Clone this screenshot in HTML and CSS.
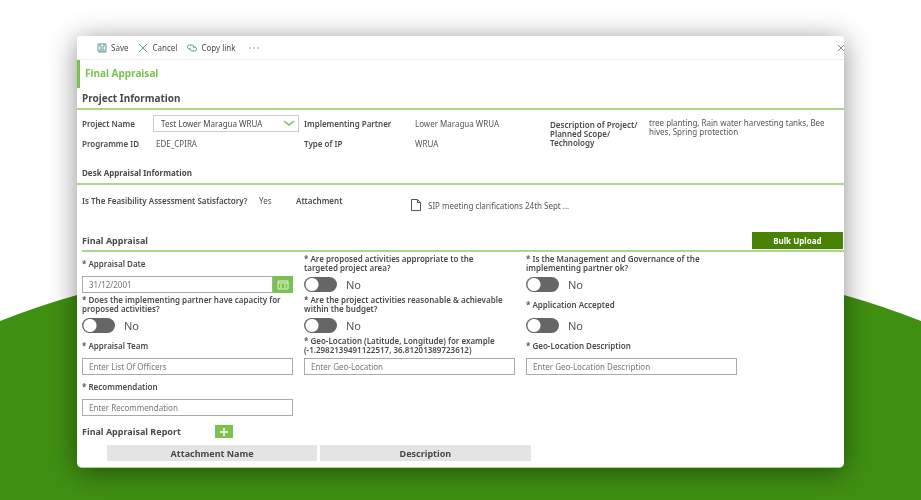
FILE: index.html
```
<!DOCTYPE html>
<html lang="en">
<head>
  <meta charset="UTF-8" />
  <meta name="viewport" content="width=device-width, initial-scale=1.0"/>
  <title>Final Appraisal</title>
  <link rel="stylesheet" href="styles.css">
</head>
<body>
  <svg class="hill" viewBox="0 0 921 207" preserveAspectRatio="none" aria-hidden="true">
    <path d="M0 28 Q38 13 77 2 L300 -60 H621 L844 2 Q883 13 921 28 V207 H0 Z" fill="#3f9012"/>
  </svg>

  <main class="card">
    <!-- Command bar -->
    <div class="toolbar">
      <button type="button" class="tool">
        <svg class="icon" viewBox="0 0 10 10"><path d="M1 1h8v8H2L1 8zM3 1v3h4V1M3 9V6h4v3M5 7v2"/></svg>
        Save
      </button>
      <button type="button" class="tool">
        <svg class="icon" viewBox="0 0 10 10"><path d="M1 1l8 8M9 1l-8 8"/></svg>
        Cancel
      </button>
      <button type="button" class="tool">
        <svg class="icon" viewBox="0 0 10 10"><path d="M3.500 6H2.500a2 2 0 0 1 0-4H5a2 2 0 0 1 1.500 3.200M6 4h1.500a2 2 0 0 1 0 4H5a2 2 0 0 1-1.500-3.200"/></svg>
        Copy link
      </button>
      <button type="button" class="tool more" aria-label="More">
        <svg class="icon dots" viewBox="0 0 10 10"><circle cx="1" cy="5" r=".7"/><circle cx="5" cy="5" r=".7"/><circle cx="9" cy="5" r=".7"/></svg>
      </button>
      <button type="button" class="tool close" aria-label="Close">
        <svg class="icon" viewBox="0 0 10 10"><path d="M2 2l6 6M8 2l-6 6"/></svg>
      </button>
    </div>

    <h1 class="title">Final Appraisal</h1>

    <h2 class="section-title large">Project Information</h2>
    <div class="info">
      <div class="pairs name-pairs">
        <label class="label" for="project">Project Name</label>
        <div class="select-wrap">
          <select id="project"><option>Test Lower Maragua WRUA</option></select>
          <svg class="chevron" viewBox="0 0 12 8"><path d="M1 2l5 4 5-4"/></svg>
        </div>
        <span class="label">Programme ID</span>
        <span class="value indent">EDE_CPIRA</span>
      </div>
      <div class="pairs partner-pairs">
        <span class="label">Implementing Partner</span>
        <span class="value">Lower Maragua WRUA</span>
        <span class="label">Type of IP</span>
        <span class="value">WRUA</span>
      </div>
      <div class="scope">
        <span class="label scope-label">Description of Project/<br>Planned Scope/<br>Technology</span>
        <span class="value">tree planting, Rain water harvesting tanks, Bee hives, Spring protection</span>
      </div>
    </div>

    <h2 class="section-title">Desk Appraisal Information</h2>
    <div class="desk">
      <span class="label">Is The Feasibility Assessment Satisfactory?</span>
      <span class="value">Yes</span>
      <span class="label">Attachment</span>
      <a class="file" href="#">
        <svg class="file-icon" viewBox="0 0 10 12"><path d="M.5.5h6l3 3v8h-9zM6.500.5v3h3"/></svg>
        SIP meeting clarifications 24th Sept ...
      </a>
    </div>

    <div class="section-bar">
      <h2>Final Appraisal</h2>
      <button type="button" class="bulk">Bulk Upload</button>
    </div>

    <form class="form">
      <div class="field">
        <label for="date">* Appraisal Date</label>
        <div class="date">
          <input type="text" id="date" value="31/12/2001">
          <button type="button" aria-label="Pick a date">
            <svg viewBox="0 0 12 10"><path d="M1 1h10v8H1zM1 3h10M3 5h2M7 5h2M3 7h2M7 7h2"/></svg>
          </button>
        </div>
      </div>
      <div class="field">
        <label for="activities">* Are proposed activities appropriate to the targeted project area?</label>
        <div class="switch"><input type="checkbox" id="activities"><span>No</span></div>
      </div>
      <div class="field">
        <label for="governance">* Is the Management and Governance of the implementing partner ok?</label>
        <div class="switch"><input type="checkbox" id="governance"><span>No</span></div>
      </div>
      <div class="field">
        <label for="capacity">* Does the implementing partner have capacity for proposed activities?</label>
        <div class="switch"><input type="checkbox" id="capacity"><span>No</span></div>
      </div>
      <div class="field">
        <label for="budget">* Are the project activities reasonable &amp; achievable within the budget?</label>
        <div class="switch"><input type="checkbox" id="budget"><span>No</span></div>
      </div>
      <div class="field">
        <label for="accepted">* Application Accepted</label>
        <div class="switch"><input type="checkbox" id="accepted"><span>No</span></div>
      </div>
      <div class="field">
        <label for="team">* Appraisal Team</label>
        <input type="text" id="team" placeholder="Enter List Of Officers">
      </div>
      <div class="field">
        <label for="geo">* Geo-Location (Latitude, Longitude) for example (-1.2982139491122517, 36.81201389723612)</label>
        <input type="text" id="geo" placeholder="Enter Geo-Location">
      </div>
      <div class="field">
        <label for="geo-desc">* Geo-Location Description</label>
        <input type="text" id="geo-desc" placeholder="Enter Geo-Location Description">
      </div>
      <div class="field">
        <label for="recommendation">* Recommendation</label>
        <input type="text" id="recommendation" placeholder="Enter Recommendation">
      </div>
    </form>

    <div class="report">
      <h2>Final Appraisal Report</h2>
      <button type="button" class="add" aria-label="Add report">
        <svg viewBox="0 0 8 8"><path d="M4 0v8M0 4h8"/></svg>
      </button>
    </div>
    <table class="attachments">
      <thead>
        <tr><th>Attachment Name</th><th>Description</th></tr>
      </thead>
    </table>
  </main>
</body>
</html>
```
FILE: styles.css
```
* {
  box-sizing: border-box;
}

body {
  margin: 0;
  min-height: 100vh;
  padding: 36px 77px 32px;
  font-family: "Noto Sans", "Open Sans", sans-serif;
  font-size: 8px;
  line-height: 9px;
  color: #4a4a4a;
  background: #fff;
}

/* green backdrop behind the card */
.hill {
  position: fixed;
  left: 0;
  bottom: 0;
  width: 100%;
  height: 207px;
  z-index: -1;
}

button, input, select {
  font: inherit;
  color: inherit;
}

button {
  border: none;
  padding: 0;
  cursor: pointer;
}

h1, h2 {
  margin: 0;
  font-size: 9px;
  font-weight: 700;
}

svg {
  fill: none;
}

.card {
  background: #fff;
  border-radius: 3px 3px 5px 5px;
  border-bottom: 1px solid #a9d18e;
  box-shadow: 0 4px 28px rgba(0, 0, 0, 0.45);
  padding-bottom: 6px;
  overflow: hidden;
}

.toolbar {
  display: flex;
  align-items: center;
  gap: 10px;
  height: 24px;
  padding-left: 20px;
  border-bottom: 1px solid #eee;
}

.tool {
  display: flex;
  align-items: center;
  gap: 4px;
  background: none;
}

.more {
  margin-left: 3px;
}

.icon {
  width: 10px;
  height: 10px;
  stroke: #45919b;
  stroke-width: 0.9;
}

.dots {
  fill: #777;
  stroke: none;
}

.close {
  margin-left: auto;
  margin-right: -2px;
}

.close .icon {
  stroke: #777;
}

.title {
  border-left: 3px solid #7ac150;
  padding: 9px 5px 10px;
  font-size: 10px;
  color: #7ac150;
}

.section-title {
  padding: 0 5px 6px;
  border-bottom: 2px solid #a9d68a;
  font-size: 8px;
}

.section-title.large {
  padding-top: 6px;
  padding-bottom: 5px;
  font-size: 10px;
}

.label {
  font-weight: 600;
}

.value {
  color: #555;
}

.info {
  display: grid;
  grid-template-columns: 222fr 246fr 294fr;
  padding: 3px 0 15px 5px;
}

.pairs {
  display: grid;
  grid-template-rows: 20px 20px;
  align-items: center;
}

.name-pairs {
  grid-template-columns: 71fr 151fr;
}

.partner-pairs {
  grid-template-columns: 111fr 135fr;
}

.scope {
  display: grid;
  grid-template-columns: 99fr 195fr;
  padding-top: 5px;
}

.scope-label {
  padding-top: 2px;
}

.indent {
  padding-left: 3px;
}

.select-wrap {
  position: relative;
  margin-right: 5px;
}

.select-wrap select {
  display: block;
  width: 100%;
  height: 17px;
  padding: 0 7px;
  border: 1px solid #ccc;
  background: #fff;
  line-height: 15px;
  appearance: none;
}

.chevron {
  position: absolute;
  top: 4px;
  right: 4px;
  width: 12px;
  height: 8px;
  stroke: #7ac150;
  stroke-width: 1.5;
  pointer-events: none;
}

.desk {
  display: grid;
  grid-template-columns: 177fr 37fr 115fr 433fr;
  align-items: start;
  padding: 11px 0 21px 5px;
}

.file {
  display: flex;
  align-items: center;
  gap: 7px;
  padding-top: 3px;
  color: #555;
  text-decoration: none;
}

.file-icon {
  width: 10px;
  height: 12px;
  stroke: #555;
}

.section-bar {
  display: flex;
  justify-content: space-between;
  align-items: center;
  margin-left: 5px;
  padding: 0 1px 1px 0;
  border-bottom: 2px solid #a9d68a;
}

.bulk {
  width: 12%;
  height: 17px;
  background: #498205;
  color: #fff;
  font-weight: 700;
}

/* three field columns, the fourth stays empty */
.form {
  display: grid;
  grid-template-columns: repeat(3, 211fr) 96fr;
  column-gap: 11px;
  margin-left: 5px;
}

.field:nth-child(3n + 1) {
  grid-column: 1;
}

.field label {
  display: flex;
  align-items: center;
  height: 24px;
  padding: 0 8px 2px 0;
  font-weight: 600;
}

.field input[type="text"] {
  display: block;
  width: 100%;
  height: 17px;
  padding: 0 6px;
  border: 1px solid #aaa;
  color: #777;
  line-height: 15px;
}

.field input::placeholder {
  color: #777;
}

.date {
  display: flex;
}

.date button {
  flex: 0 0 20px;
  height: 17px;
  background: #7ac150;
}

.date svg {
  display: block;
  width: 12px;
  height: 10px;
  margin: 0 auto;
  stroke: #e4f3da;
}

.switch {
  display: flex;
  align-items: center;
  gap: 9px;
  height: 17px;
  font-size: 11px;
  color: #555;
}

.switch input {
  appearance: none;
  width: 33px;
  height: 15px;
  margin: 0;
  border-radius: 8px;
  background: radial-gradient(circle at 8px 50%, #fff 6px, #666 7px);
}

.report {
  display: flex;
  align-items: center;
  gap: 34px;
  margin: 9px 5px 7px;
}

.add {
  width: 18px;
  height: 13px;
  background: #7ac150;
}

.add svg {
  display: block;
  width: 8px;
  height: 8px;
  margin: 0 auto;
  stroke: #fff;
  stroke-width: 1.5;
}

.attachments {
  width: 56%;
  margin-left: 27px;
  border-spacing: 3px 0;
  table-layout: fixed;
}

.attachments th {
  height: 16px;
  padding: 0;
  background: #e4e4e4;
  font-size: 9px;
  font-weight: 700;
}
```
